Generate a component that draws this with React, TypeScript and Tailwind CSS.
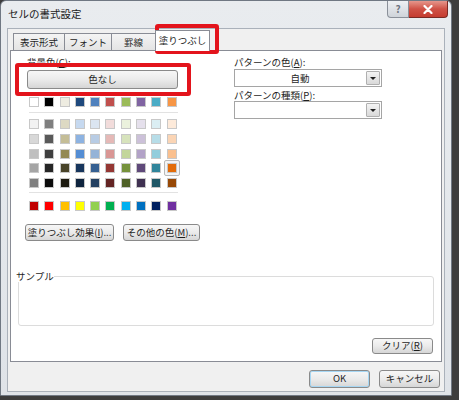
import React from 'react'

const themeRow = ['#FFFFFF', '#000000', '#EEECE1', '#1F497D', '#4F81BD', '#C0504D', '#9BBB59', '#8064A2', '#4BACC6', '#F79646']

const shadeRows = [
  ['#F2F2F2', '#7F7F7F', '#DDD9C3', '#C6D9F0', '#DBE5F1', '#F2DCDB', '#EBF1DD', '#E5E0EC', '#DBEEF3', '#FDEADA'],
  ['#D8D8D8', '#595959', '#C4BD97', '#8DB3E2', '#B8CCE4', '#E5B9B7', '#D7E3BC', '#CCC1D9', '#B7DDE8', '#FBD5B5'],
  ['#BFBFBF', '#3F3F3F', '#938953', '#548DD4', '#95B3D7', '#D99694', '#C3D69B', '#B2A2C7', '#92CDDC', '#FAC08F'],
  ['#A5A5A5', '#262626', '#494429', '#17365D', '#366092', '#953734', '#76923C', '#5F497A', '#31859B', '#E36C09'],
  ['#7F7F7F', '#0C0C0C', '#1D1B10', '#0F243E', '#244061', '#632423', '#4F6128', '#3F3151', '#205867', '#974806'],
]

const standardRow = ['#C00000', '#FF0000', '#FFC000', '#FFFF00', '#92D050', '#00B050', '#00B0F0', '#0070C0', '#002060', '#7030A0']

function Swatch({ color, selected }: { color: string; selected?: boolean }) {
  return (
    <div className="relative h-[10px] w-[10px]">
      {selected && (
        <div className="absolute -left-[3px] -top-[3px] h-[16px] w-[16px] rounded-[2px] border border-[#b9b9b9] bg-[#f4f4f4]"></div>
      )}
      <div className="relative h-[10px] w-[10px] border border-[#c8c8c8]" style={{ backgroundColor: color }}></div>
    </div>
  )
}

function WinButton({ children, className = '' }: { children: React.ReactNode; className?: string }) {
  return (
    <div
      className={`flex items-center justify-center rounded-[3px] border border-[#8a8a8a] bg-gradient-to-b from-[#f7f7f7] via-[#ebebeb] to-[#d6d6d6] text-[9.5px] leading-none text-[#1e1e1e] ${className}`}
    >
      {children}
    </div>
  )
}

function Select({ value }: { value: string }) {
  return (
    <div className="flex h-[18px] w-[148px] border border-[#a5a5a5] bg-white">
      <div className="flex flex-1 items-center justify-center text-[9.5px] text-[#1e1e1e]">{value}</div>
      <div className="m-[1px] flex w-[14px] items-center justify-center rounded-[1px] border border-[#b0b0b0] bg-gradient-to-b from-[#f4f4f4] to-[#d9d9d9]">
        <div className="h-0 w-0 border-x-[3px] border-t-[3px] border-x-transparent border-t-[#202020]"></div>
      </div>
    </div>
  )
}

function Tab({ label, active, className = '' }: { label: string; active?: boolean; className?: string }) {
  if (active) {
    return (
      <div
        className={`relative z-10 -mb-[1px] flex h-[21px] items-center justify-center border border-b-0 border-[#898c95] bg-white pb-[2px] text-[9.5px] text-[#1e1e1e] ${className}`}
      >
        {label}
      </div>
    )
  }
  return (
    <div
      className={`flex h-[17px] items-center justify-center border border-b-0 border-[#898c95] bg-gradient-to-b from-[#f4f4f4] to-[#e4e4e4] text-[9.5px] text-[#1e1e1e] ${className}`}
    >
      {label}
    </div>
  )
}

export default function App() {
  return (
    <div className="relative h-[400px] w-[459px] overflow-hidden bg-[#3d3d3d] font-['Noto_Sans_CJK_JP','Noto_Sans',sans-serif]">
      <div className="relative flex h-[396px] w-[452px] flex-col rounded-tl-[6px] rounded-tr-[6px] border border-[#707883] bg-gradient-to-b from-[#e9ecef] to-[#dfe3e8]">
        {/* title bar */}
        <div className="flex h-[27px] items-start">
          <div className="pl-[7px] pt-[6px] text-[10.5px] leading-[14px] text-[#1a1a1a]">セルの書式設定</div>
          <div className="ml-auto mr-[3px] flex">
            <div className="flex h-[17px] w-[22px] items-center justify-center rounded-bl-[4px] border border-t-0 border-[#8a9099] bg-gradient-to-b from-[#eef0f3] to-[#cfd4da] text-[10px] font-bold leading-none text-[#6e7580]">
              ?
            </div>
            <div className="flex h-[17px] w-[39px] items-center justify-center rounded-br-[4px] border border-l-0 border-t-0 border-[#7a2a24] bg-gradient-to-b from-[#e5968c] via-[#cf5146] to-[#c53c30]">
              <svg width="10" height="9" viewBox="0 0 10 9">
                <path d="M1.5 1 L8.5 8 M8.5 1 L1.5 8" stroke="#ffffff" strokeWidth="2.2" strokeLinecap="round" />
              </svg>
            </div>
          </div>
        </div>

        {/* client area */}
        <div className="mx-[6px] mb-[3px] flex flex-1 flex-col border border-[#aab1ba] bg-[#f0f0f0]">
          <div className="flex h-[21px] items-end pl-[5px]">
            <Tab label="表示形式" className="w-[52px]" />
            <Tab label="フォント" className="-ml-[1px] w-[48px]" />
            <Tab label="罫線" className="-ml-[1px] w-[45px]" />
            <Tab label="塗りつぶし" active className="-ml-[1px] w-[55px]" />
          </div>

          <div className="mx-[2px] flex h-[312px] flex-col border border-[#898c95] bg-white">
            <div className="flex">
              {/* left column */}
              <div className="flex w-[223px] flex-col pl-[16px]">
                <div className="mt-[5px] h-[12px] text-[9.5px] leading-[12px] text-[#1e1e1e]">
                  背景色(<span className="underline">C</span>):
                </div>
                <WinButton className="mt-[2px] h-[19px] w-[151px]">色なし</WinButton>
                <div className="ml-[2px] mt-[8px] flex gap-x-[5.3px]">
                  {themeRow.map((c) => (
                    <Swatch key={c} color={c} />
                  ))}
                </div>
                <div className="ml-[2px] mt-[5px] h-[1px] w-[149px] bg-[#e2e2e2]"></div>
                <div className="ml-[2px] mt-[6px] flex flex-col gap-y-[4.8px]">
                  {shadeRows.map((row, ri) => (
                    <div key={ri} className="flex gap-x-[5.3px]">
                      {row.map((c, ci) => (
                        <Swatch key={c + ci} color={c} selected={ri === 3 && ci === 9} />
                      ))}
                    </div>
                  ))}
                </div>
                <div className="ml-[2px] mt-[4px] h-[1px] w-[149px] bg-[#e2e2e2]"></div>
                <div className="ml-[2px] mt-[8px] flex gap-x-[5.3px]">
                  {standardRow.map((c) => (
                    <Swatch key={c} color={c} />
                  ))}
                </div>
                <div className="-ml-[2px] mt-[13px] flex gap-[9px]">
                  <WinButton className="h-[17px] w-[89px]">
                    塗りつぶし効果(<span className="underline">I</span>)...
                  </WinButton>
                  <WinButton className="h-[17px] w-[77px]">
                    その他の色(<span className="underline">M</span>)...
                  </WinButton>
                </div>
              </div>

              {/* right column */}
              <div className="flex flex-col">
                <div className="mt-[5px] h-[12px] text-[9.5px] leading-[12px] text-[#1e1e1e]">
                  パターンの色(<span className="underline">A</span>):
                </div>
                <div className="mt-[1px]">
                  <Select value="自動" />
                </div>
                <div className="mt-[2px] h-[12px] text-[9.5px] leading-[12px] text-[#1e1e1e]">
                  パターンの種類(<span className="underline">P</span>):
                </div>
                <Select value="" />
              </div>
            </div>

            <fieldset className="mx-[7px] mt-[29px] h-[56px] rounded-[3px] border border-[#dcdcdc]">
              <legend className="-ml-[3px] text-[9.5px] leading-[12px] text-[#1e1e1e]">サンプル</legend>
            </fieldset>

            <div className="mr-[8px] mt-[12px] flex justify-end">
              <WinButton className="h-[16px] w-[61px]">
                クリア(<span className="underline">R</span>)
              </WinButton>
            </div>
          </div>

          <div className="mt-[8px] flex justify-end gap-[9px] pr-[4px]">
            <WinButton className="h-[18px] w-[61px] border-[#3c7fb1] shadow-[inset_0_0_0_1px_#a6d6f3]">OK</WinButton>
            <WinButton className="h-[18px] w-[61px]">キャンセル</WinButton>
          </div>
        </div>

        {/* red annotation boxes */}
        <div className="absolute left-[154px] top-[23px] h-[30px] w-[64px] rounded-[3px] border-[4px] border-[#e3141c]"></div>
        <div className="absolute left-[14px] top-[62px] h-[33px] w-[176px] rounded-[3px] border-[4px] border-[#e3141c]"></div>
      </div>
    </div>
  )
}
